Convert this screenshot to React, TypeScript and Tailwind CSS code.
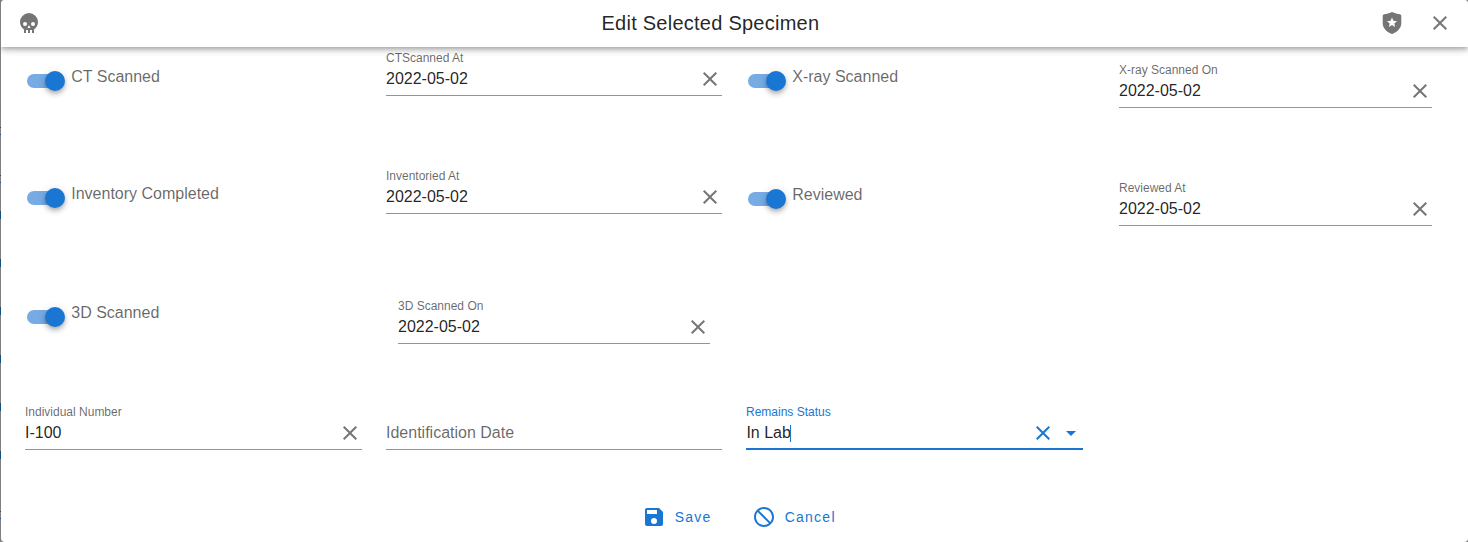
import React from 'react';

const paths = {
  skull:
    'M12,2A9,9 0 0,0 3,11C3,14.03 4.53,16.82 7,18.47V22H9V19H11V22H13V19H15V22H17V18.46C19.47,16.81 21,14 21,11A9,9 0 0,0 12,2M8,11A2,2 0 0,1 10,13A2,2 0 0,1 8,15A2,2 0 0,1 6,13A2,2 0 0,1 8,11M16,11A2,2 0 0,1 18,13A2,2 0 0,1 16,15A2,2 0 0,1 14,13A2,2 0 0,1 16,11M12,14L13.5,17H10.5L12,14Z',
  close:
    'M19,6.41L17.59,5L12,10.59L6.41,5L5,6.41L10.59,12L5,17.59L6.41,19L12,13.41L17.59,19L19,17.59L13.41,12L19,6.41Z',
  menuDown: 'M7,10L12,15L17,10H7Z',
  save:
    'M15,9H5V5H15M12,19A3,3 0 0,1 9,16A3,3 0 0,1 12,13A3,3 0 0,1 15,16A3,3 0 0,1 12,19M17,3H5C3.89,3 3,3.9 3,5V19A2,2 0 0,0 5,21H19A2,2 0 0,0 21,19V7L17,3Z',
  cancel:
    'M12 2C17.5 2 22 6.5 22 12S17.5 22 12 22 2 17.5 2 12 6.5 2 12 2M12 4C10.1 4 8.4 4.6 7.1 5.7L18.3 16.9C19.3 15.5 20 13.8 20 12C20 7.6 16.4 4 12 4M16.9 18.3L5.7 7.1C4.6 8.4 4 10.1 4 12C4 16.4 7.6 20 12 20C13.9 20 15.6 19.4 16.9 18.3Z',
  shieldStar:
    'M11.3 1.2Q12 .8 12.7 1.2C14.8 2.3 17.2 3 19.8 3.3Q21.3 3.5 21.3 5V12C21.3 17.2 17.2 21.3 12 23C6.8 21.3 2.7 17.2 2.7 12V5Q2.7 3.5 4.2 3.3C6.8 3 9.2 2.3 11.3 1.2M15.08 16L14.27 12.5L17 10.16L13.42 9.84L12 6.5L10.58 9.84L7 10.16L9.73 12.5L8.92 16L12 14.12L15.08 16Z',
};

function Icon({ name, className = '' }: { name: keyof typeof paths; className?: string }) {
  return (
    <svg viewBox="0 0 24 24" fill="currentColor" className={`size-6 shrink-0 ${className}`}>
      <path fillRule="evenodd" d={paths[name]} />
    </svg>
  );
}

function Toggle({ label, className = '' }: { label: string; className?: string }) {
  return (
    <div className={`flex items-start ${className}`}>
      <span className="mt-[5px] flex h-5 w-[38px] items-center rounded-full">
        <span className="h-[14px] w-[28px] rounded-full bg-[#76abe4]" />
        <span className="-ml-[10px] size-5 shrink-0 rounded-full bg-[#1976d2] shadow-[0_2px_4px_-1px_rgba(0,0,0,0.2),0_4px_5px_0_rgba(0,0,0,0.14),0_1px_10px_0_rgba(0,0,0,0.12)]" />
      </span>
      <span className="mt-px ml-[6.25px] text-base leading-5 text-black/60">{label}</span>
    </div>
  );
}

function Field({ label, value, className = '' }: { label: string; value?: string; className?: string }) {
  return (
    <div className={`flex h-[46px] flex-col border-b border-[#949494] pt-px ${className}`}>
      <span className="h-4 text-xs leading-[14px] text-black/60">{value ? label : ''}</span>
      <div className="flex h-6 items-center justify-between">
        <span className={value ? 'text-base leading-5 text-black/87' : 'text-base leading-5 text-black/60'}>
          {value ?? label}
        </span>
        {value && <Icon name="close" className="text-black/54" />}
      </div>
    </div>
  );
}

const edgeRows = ['outlined', 'outlined', 'solid', 'solid', 'solid', 'solid', 'solid', 'solid'];

export default function App() {
  return (
    <div className="flex h-[542px] w-[1468px] overflow-hidden bg-[#808080] font-['Liberation_Sans',Arial,sans-serif]">
      <div className="h-full w-px shrink-0 overflow-hidden pt-[106px]">
        {edgeRows.map((kind, i) => (
          <div key={i} className={`flex h-12 flex-col border-t border-[#727272] ${kind === 'solid' ? 'pt-2' : 'pt-5'}`}>
            {kind === 'solid' ? (
              <div className="h-2 bg-[#1b4c80]" />
            ) : (
              <div className="h-2 border-y border-[#1b4c80]" />
            )}
          </div>
        ))}
        <div className="mt-[21px] h-2 border-y border-[#1b4c80]" />
      </div>
      <div className="flex h-full w-[1467px] flex-col overflow-hidden rounded-[4px] bg-white">
        <header className="grid h-[47px] shrink-0 grid-cols-[584.5px_auto_1fr] items-center bg-white px-4 pb-[2px] shadow-[0_2px_4px_-1px_rgba(0,0,0,0.2),0_4px_5px_0_rgba(0,0,0,0.14),0_1px_10px_0_rgba(0,0,0,0.12)]">
          <Icon name="skull" className="text-black/54" />
          <h1 className="text-xl tracking-[0.25px] text-black/87">Edit Selected Specimen</h1>
          <div className="flex justify-end gap-6 text-black/54">
            <Icon name="shieldStar" />
            <Icon name="close" />
          </div>
        </header>
        <main className="grid grid-cols-[361px_360px_361px_361px] grid-rows-[118px_118px_118px_87px] pl-6">
          <Toggle label="CT Scanned" className="pt-[19px] pl-[2px]" />
          <Field label="CTScanned At" value="2022-05-02" className="mt-[3px] w-[336px]" />
          <Toggle label="X-ray Scanned" className="pt-[19px] pl-[2px]" />
          <Field label="X-ray Scanned On" value="2022-05-02" className="mt-[15px] ml-3 w-[313px]" />

          <Toggle label="Inventory Completed" className="pt-[18px] pl-[2px]" />
          <Field label="Inventoried At" value="2022-05-02" className="mt-[3px] w-[336px]" />
          <Toggle label="Reviewed" className="pt-[19px] pl-[2px]" />
          <Field label="Reviewed At" value="2022-05-02" className="mt-[15px] ml-3 w-[313px]" />

          <Toggle label="3D Scanned" className="pt-[19px] pl-[2px]" />
          <Field label="3D Scanned On" value="2022-05-02" className="mt-[15px] ml-3 w-[312px]" />
          <div className="col-span-2" />

          <Field label="Individual Number" value="I-100" className="mt-[3px] w-[337px]" />
          <Field label="Identification Date" className="mt-[3px] w-[336px]" />
          <div className="mt-[3px] flex h-[46px] w-[337px] flex-col border-b-2 border-[#1976d2] pt-px text-[#1976d2]">
            <span className="h-4 text-xs leading-[14px]">Remains Status</span>
            <div className="flex h-6 items-center">
              <span className="pl-[0.4px] text-base leading-5 text-black/87">In Lab</span>
              <span className="-ml-px h-[17px] w-px bg-[#1976d2]" />
              <Icon name="close" className="ml-auto" />
              <Icon name="menuDown" className="ml-1" />
            </div>
          </div>
        </main>
        <footer className="flex h-[54px] items-center justify-center gap-10 pt-1 pl-[8.5px] text-sm tracking-[1.25px] text-[#1976d2]">
          <button className="flex items-center gap-[9px]">
            <Icon name="save" />
            Save
          </button>
          <button className="flex items-center gap-[9px]">
            <Icon name="cancel" />
            Cancel
          </button>
        </footer>
      </div>
    </div>
  );
}
